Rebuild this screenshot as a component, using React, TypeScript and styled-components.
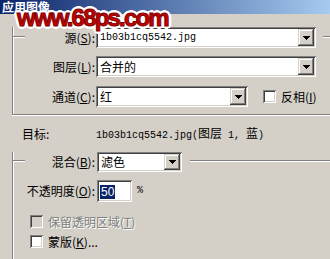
import React from 'react';
import styled, { createGlobalStyle } from 'styled-components';

const GlobalStyle = createGlobalStyle`
  html, body {
    margin: 0;
    padding: 0;
    background: #d4d0c8;
  }
`;

const sunken = `
  box-shadow: inset 1px 1px #808080, inset -1px -1px #ffffff,
    inset 2px 2px #404040, inset -2px -2px #d4d0c8;
`;

const Window = styled.div`
  position: relative;
  width: 330px;
  height: 259px;
  overflow: hidden;
  background: #d4d0c8;
  font-family: 'Noto Sans CJK SC', 'Noto Sans', sans-serif;
  font-size: 12px;
  line-height: 14px;
  color: #000;
`;

const TitleBar = styled.div`
  height: 14px;
  padding-left: 2px;
  background: linear-gradient(to right, #0a246a, #a6caf0);
  color: #fff;
  font-weight: 700;
  font-size: 12px;
  line-height: 13px;
`;

const Watermark = styled.div`
  position: absolute;
  left: 17px;
  top: 4px;
  font-family: 'Liberation Sans', Arial, sans-serif;
  font-weight: 700;
  font-size: 24px;
  line-height: 28px;
  letter-spacing: -1.8px;
  color: #c80000;
  -webkit-text-stroke: 1px #7c0000;
  text-shadow: 2px 0 #fff, -2px 0 #fff, 0 2px #fff, 0 -2px #fff, 2px 2px #fff,
    -2px -2px #fff, 2px -2px #fff, -2px 2px #fff, 3px 0 #fff, -3px 0 #fff,
    0 3px #fff, 0 -3px #fff;
  pointer-events: none;
`;

const Group = styled.div<{ top: number; pad?: number; open?: boolean }>`
  margin-left: 12px;
  margin-top: ${(p) => p.top}px;
  padding-bottom: ${(p) => p.pad ?? 0}px;
  border-left: 1px solid #808080;
  border-bottom: ${(p) => (p.open ? 'none' : '1px solid #808080')};
  box-shadow: inset 1px 0 #fff, 0 1px #fff;
  min-height: ${(p) => (p.open ? '120px' : 'auto')};
`;

const GroupHead = styled.div<{ lift: number; h: number }>`
  display: flex;
  align-items: flex-start;
  height: ${(p) => p.h}px;
  margin-top: -${(p) => p.lift}px;
`;

const Rule = styled.div<{ w?: number; gap?: number; at: number }>`
  ${(p) => (p.w ? `width: ${p.w}px;` : 'flex: 1;')}
  margin-left: ${(p) => p.gap ?? 0}px;
  margin-top: ${(p) => p.at}px;
  height: 1px;
  background: #808080;
  border-bottom: 1px solid #fff;
`;

const Row = styled.div<{ top: number; h: number }>`
  display: flex;
  align-items: center;
  margin-top: ${(p) => p.top}px;
  height: ${(p) => p.h}px;
`;

const Label = styled.div<{ w: number; h?: number }>`
  width: ${(p) => p.w}px;
  ${(p) => (p.h ? `height: ${p.h}px;` : '')}
  display: flex;
  align-items: center;
  justify-content: flex-end;
  flex-shrink: 0;
  white-space: nowrap;
`;

const PlainLabel = styled.div<{ w: number; left: number }>`
  width: ${(p) => p.w}px;
  margin-left: ${(p) => p.left}px;
  flex-shrink: 0;
  white-space: nowrap;
`;

const Mono = styled.span`
  font-family: 'Liberation Mono', 'DejaVu Sans Mono', monospace;
  font-size: 10px;
`;

const Combo = styled.div<{ w: number; left: number; h: number }>`
  display: flex;
  align-items: stretch;
  width: ${(p) => p.w}px;
  height: ${(p) => p.h}px;
  margin-left: ${(p) => p.left}px;
  padding: 2px;
  box-sizing: border-box;
  background: #fff;
  flex-shrink: 0;
  ${sunken}
`;

const ComboText = styled.div`
  flex: 1;
  display: flex;
  align-items: center;
  padding-left: 2px;
  white-space: nowrap;
  overflow: hidden;
`;

const DropButton = styled.div`
  width: 16px;
  display: flex;
  align-items: center;
  justify-content: center;
  background: #d4d0c8;
  box-shadow: inset -1px -1px #404040, inset 1px 1px #d4d0c8,
    inset -2px -2px #808080, inset 2px 2px #fff;
`;

const Box = styled.div<{ disabled?: boolean; left: number }>`
  width: 13px;
  height: 13px;
  margin-left: ${(p) => p.left}px;
  box-sizing: border-box;
  flex-shrink: 0;
  background: ${(p) => (p.disabled ? '#d4d0c8' : '#fff')};
  ${sunken}
`;

const CheckText = styled.span<{ disabled?: boolean }>`
  margin-left: 5px;
  white-space: nowrap;
  color: ${(p) => (p.disabled ? '#808080' : '#000')};
  text-shadow: ${(p) => (p.disabled ? '1px 1px #fff' : 'none')};
`;

const Field = styled.div`
  width: 35px;
  height: 22px;
  margin-left: 2px;
  padding: 2px 0 0 3px;
  box-sizing: border-box;
  display: flex;
  align-items: center;
  background: #fff;
  ${sunken}
`;

const Selected = styled.span`
  background: #0a246a;
  color: #fff;
  font-family: 'Liberation Sans', Arial, sans-serif;
  font-size: 12px;
  line-height: 14px;
  padding: 0 1px;
`;

const Percent = styled.span`
  margin-left: 5px;
  font-family: 'Liberation Mono', monospace;
  font-size: 10px;
`;

const Arrow = () => (
  <svg width="7" height="4" viewBox="0 0 7 4">
    <rect x="0" y="0" width="7" height="1" fill="#000" />
    <rect x="1" y="1" width="5" height="1" fill="#000" />
    <rect x="2" y="2" width="3" height="1" fill="#000" />
    <rect x="3" y="3" width="1" height="1" fill="#000" />
  </svg>
);

const Select: React.FC<{ w: number; left: number; h: number; children: React.ReactNode }> = ({
  w,
  left,
  h,
  children
}) => (
  <Combo w={w} left={left} h={h}>
    <ComboText>{children}</ComboText>
    <DropButton>
      <Arrow />
    </DropButton>
  </Combo>
);

export default function App() {
  return (
    <Window>
      <GlobalStyle />
      <TitleBar>应用图像</TitleBar>
      <Watermark>www.68ps.com</Watermark>

      <Group top={22} pad={7}>
        <GroupHead lift={9} h={21}>
          <Rule w={12} at={9} />
          <Label w={70} h={21}>
            源(<u>S</u>):
          </Label>
          <Select w={220} left={1} h={21}>
            <Mono>1b03b1cq5542.jpg</Mono>
          </Select>
          <Rule gap={7} at={9} />
        </GroupHead>
        <Row top={8} h={21}>
          <Label w={82}>
            图层(<u>L</u>):
          </Label>
          <Select w={220} left={1} h={21}>
            合并的
          </Select>
        </Row>
        <Row top={9} h={21}>
          <Label w={82}>
            通道(<u>C</u>):
          </Label>
          <Select w={152} left={1} h={21}>
            红
          </Select>
          <Box left={15} />
          <CheckText>
            反相(<u>I</u>)
          </CheckText>
        </Row>
      </Group>

      <Row top={12} h={14}>
        <PlainLabel w={74} left={22}>
          目标:
        </PlainLabel>
        <span>
          <Mono>1b03b1cq5542.jpg(</Mono>图层<Mono> 1, </Mono>蓝<Mono>)</Mono>
        </span>
      </Row>

      <Group top={19} open>
        <GroupHead lift={8} h={20}>
          <Rule w={12} at={8} />
          <Label w={70} h={20}>
            混合(<u>B</u>):
          </Label>
          <Select w={85} left={2} h={20}>
            滤色
          </Select>
          <Rule gap={8} at={8} />
        </GroupHead>
        <Row top={8} h={22}>
          <Label w={82}>
            不透明度(<u>O</u>):
          </Label>
          <Field>
            <Selected>50</Selected>
          </Field>
          <Percent>%</Percent>
        </Row>
        <Row top={13} h={13}>
          <Box left={17} disabled />
          <CheckText disabled>
            保留透明区域(<u>T</u>)
          </CheckText>
        </Row>
        <Row top={7} h={13}>
          <Box left={17} />
          <CheckText>
            蒙版(<u>K</u>)...
          </CheckText>
        </Row>
      </Group>
    </Window>
  );
}
